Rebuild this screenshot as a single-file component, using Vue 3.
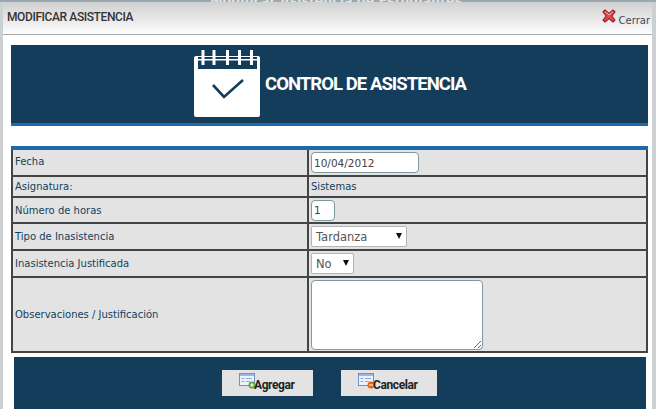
<script setup>
const ringXs = [7.5, 18.5, 32, 44, 56]
</script>

<template>
  <div class="page">
    <div class="backdrop-strip"><span>Modificar Asistencia de Estudiantes</span></div>
    <div class="dialog">
      <header class="titlebar">
        <span class="title">MODIFICAR ASISTENCIA</span>
        <span class="close">
          <svg class="close-icon" width="14" height="14" viewBox="0 0 14 14">
            <path d="M3 1 L7 4.4 L11 1 L13 3 L9.8 7 L13 11 L11 13 L7 9.6 L3 13 L1 11 L4.2 7 L1 3 Z" fill="#e4484e" stroke="#9c1a1e" stroke-width="1.1" stroke-linejoin="round" />
            <path d="M3 2.6 L7 5.8 L11 2.6" fill="none" stroke="#f6b4b4" stroke-width="1" />
          </svg>
          <span class="close-text">Cerrar</span>
        </span>
      </header>

      <div class="content">
        <div class="banner">
          <svg class="cal" width="66" height="68" viewBox="0 0 66 68">
            <rect x="0" y="6" width="66" height="61" rx="2" fill="#fff" />
            <rect x="4" y="7" width="59" height="12" fill="#143d5c" />
            <rect x="4" y="9" width="59" height="1.5" fill="#fff" />
            <rect v-for="x in ringXs" :key="x" :x="x" y="0" width="3" height="15" fill="#fff" />
            <path d="M19 35 L30 47 L49 30" fill="none" stroke="#143d5c" stroke-width="2.6" />
          </svg>
          <span class="banner-title">CONTROL DE ASISTENCIA</span>
        </div>

        <table class="form">
          <colgroup>
            <col class="c1" />
            <col />
          </colgroup>
          <tbody>
            <tr class="r1">
              <td class="lbl">Fecha</td>
              <td><input class="inp date" value="10/04/2012" /></td>
            </tr>
            <tr class="r2">
              <td class="lbl">Asignatura:</td>
              <td class="val">Sistemas</td>
            </tr>
            <tr class="r3">
              <td class="lbl">Número de horas</td>
              <td><input class="inp hours" value="1" /></td>
            </tr>
            <tr class="r4">
              <td class="lbl">Tipo de Inasistencia</td>
              <td>
                <span class="sel tipo">Tardanza<i class="arrow"></i></span>
              </td>
            </tr>
            <tr class="r5">
              <td class="lbl">Inasistencia Justificada</td>
              <td>
                <span class="sel just">No<i class="arrow"></i></span>
              </td>
            </tr>
            <tr class="r6">
              <td class="lbl">Observaciones / Justificación</td>
              <td><textarea class="area"></textarea></td>
            </tr>
          </tbody>
        </table>

        <div class="actions">
          <button class="btn add" type="button">
            <svg class="btn-icon" width="18" height="16" viewBox="0 0 18 16">
              <rect x="0.5" y="0.5" width="15" height="12" fill="#eef3fb" stroke="#6f8fcf" />
              <rect x="1" y="1" width="14" height="2" fill="#9db6e4" />
              <path d="M2.5 5.5h3M2.5 8.5h3M7 5.5h6M7 8.5h4" stroke="#8fa8d8" />
              <circle cx="13" cy="12" r="3.5" fill="#5aa83c" />
              <path d="M11 12h4M13 10v4" stroke="#fff" />
            </svg>
            <span>Agregar</span>
          </button>
          <button class="btn cancel" type="button">
            <svg class="btn-icon" width="18" height="16" viewBox="0 0 18 16">
              <rect x="0.5" y="0.5" width="15" height="12" fill="#eef3fb" stroke="#6f8fcf" />
              <rect x="1" y="1" width="14" height="2" fill="#9db6e4" />
              <path d="M2.5 5.5h3M2.5 8.5h3M7 5.5h6M7 8.5h4" stroke="#8fa8d8" />
              <circle cx="13" cy="12" r="3.5" fill="#e8641b" />
              <path d="M11 12h4" stroke="#fff" />
            </svg>
            <span>Cancelar</span>
          </button>
        </div>
      </div>
    </div>
  </div>
</template>

<style>
html, body { margin: 0; padding: 0; background: #c9cfd3; overflow: hidden; }
</style>

<style scoped>
.page {
  width: 656px;
  height: 409px;
  overflow: hidden;
  background: #ccd0d3;
  font-family: "DejaVu Sans", sans-serif;
}
.backdrop-strip {
  height: 2px;
  padding-left: 16px;
  background: #9aa8b2;
  overflow: hidden;
  text-align: center;
  line-height: 2px;
  font-size: 12.5px;
  font-weight: 700;
  color: #dfe3e6;
}
.dialog {
  margin: 0 4px 0 3px;
  height: 407px;
  background: #fff;
}
.titlebar {
  height: 32px;
  border-bottom: 1px solid #a9a9a9;
  background: linear-gradient(#d0d0d0, #fdfdfd);
  display: flex;
  justify-content: space-between;
  padding: 0 2px 0 4px;
}
.title {
  font-family: "Roboto", sans-serif;
  font-size: 12px;
  letter-spacing: -0.4px;
  font-weight: 500;
  color: #333;
  line-height: 30px;
}
.close {
  display: flex;
  align-items: flex-start;
  padding-top: 7px;
}
.close-icon { margin-right: 3px; margin-left: -1px; }
.close-text {
  font-size: 10px;
  color: #3a4a5c;
  line-height: 13px;
  margin-top: 5px;
}
.content {
  padding: 10px 4px 0 8px;
}
.banner {
  height: 78px;
  border-bottom: 3px solid #2069a8;
  background: #143d5c;
  display: flex;
  align-items: flex-start;
  padding-left: 183px;
}
.cal { margin-top: 5px; flex: none; }
.banner-title {
  margin-left: 5px;
  margin-top: 27px;
  font-family: "Roboto", sans-serif;
  font-size: 18.5px;
  letter-spacing: -0.95px;
  font-weight: 700;
  line-height: 24px;
  color: #fff;
  white-space: nowrap;
}
.form {
  margin: 20px 0 0;
  width: 637px;
  table-layout: fixed;
  border-collapse: collapse;
  border-top: 4px solid #2069a8;
  background: #e3e3e3;
  font-size: 10px;
  color: #123f5c;
}
.c1 { width: 296px; }
.form td {
  border: 2px solid #444;
  padding: 0 2px;
  vertical-align: middle;
}
.form .r1 .lbl { padding-bottom: 2px; }
.form tr:first-child td { border-top: 0; }
.r1 { height: 28px; }
.r2 { height: 21px; }
.r3 { height: 26px; }
.r4 { height: 27px; }
.r5 { height: 27px; }
.r6 { height: 75px; }
.inp, .area {
  box-sizing: border-box;
  display: block;
  margin: 0;
  border: 1px solid #7d9aa0;
  border-radius: 4px;
  background: #fff;
  font-family: "DejaVu Sans", sans-serif;
  font-size: 10.5px;
  color: #444;
  outline: none;
  padding: 0 2px;
}
.date { width: 108px; height: 21px; }
.hours { width: 24px; height: 21px; }
.area { width: 172px; height: 70px; resize: both; }
.sel {
  box-sizing: border-box;
  display: flex;
  align-items: center;
  height: 21px;
  border: 1px solid #b4b4b4;
  border-radius: 2px;
  background: #fff;
  font-family: "DejaVu Sans", sans-serif;
  font-size: 11.5px;
  color: #555;
  padding-left: 4px;
  position: relative;
}
.tipo { width: 96px; }
.just { width: 43px; }
.arrow {
  position: absolute;
  right: 4px;
  top: 6px;
  width: 0;
  height: 0;
  border-left: 3.5px solid transparent;
  border-right: 3.5px solid transparent;
  border-top: 6px solid #111;
}
.actions {
  margin: 4px 2px 0 3px;
  width: 632px;
  height: 60px;
  background: #143d5c;
  display: flex;
  justify-content: flex-start;
  gap: 28px;
  padding: 13px 0 0 208px;
  box-sizing: border-box;
}
.btn {
  height: 26px;
  border: 0;
  background: #e3e3e3;
  display: flex;
  align-items: flex-start;
  padding: 3px 0 0 17px;
  font-family: "Roboto", sans-serif;
  font-size: 12px;
  letter-spacing: -0.4px;
  font-weight: 700;
  color: #222;
  margin: 0;
}
.btn span { margin-top: 5px; line-height: 14px; }
.add { width: 91px; }
.cancel { width: 96px; }
.btn-icon { flex: none; margin-right: -3px; }
</style>
